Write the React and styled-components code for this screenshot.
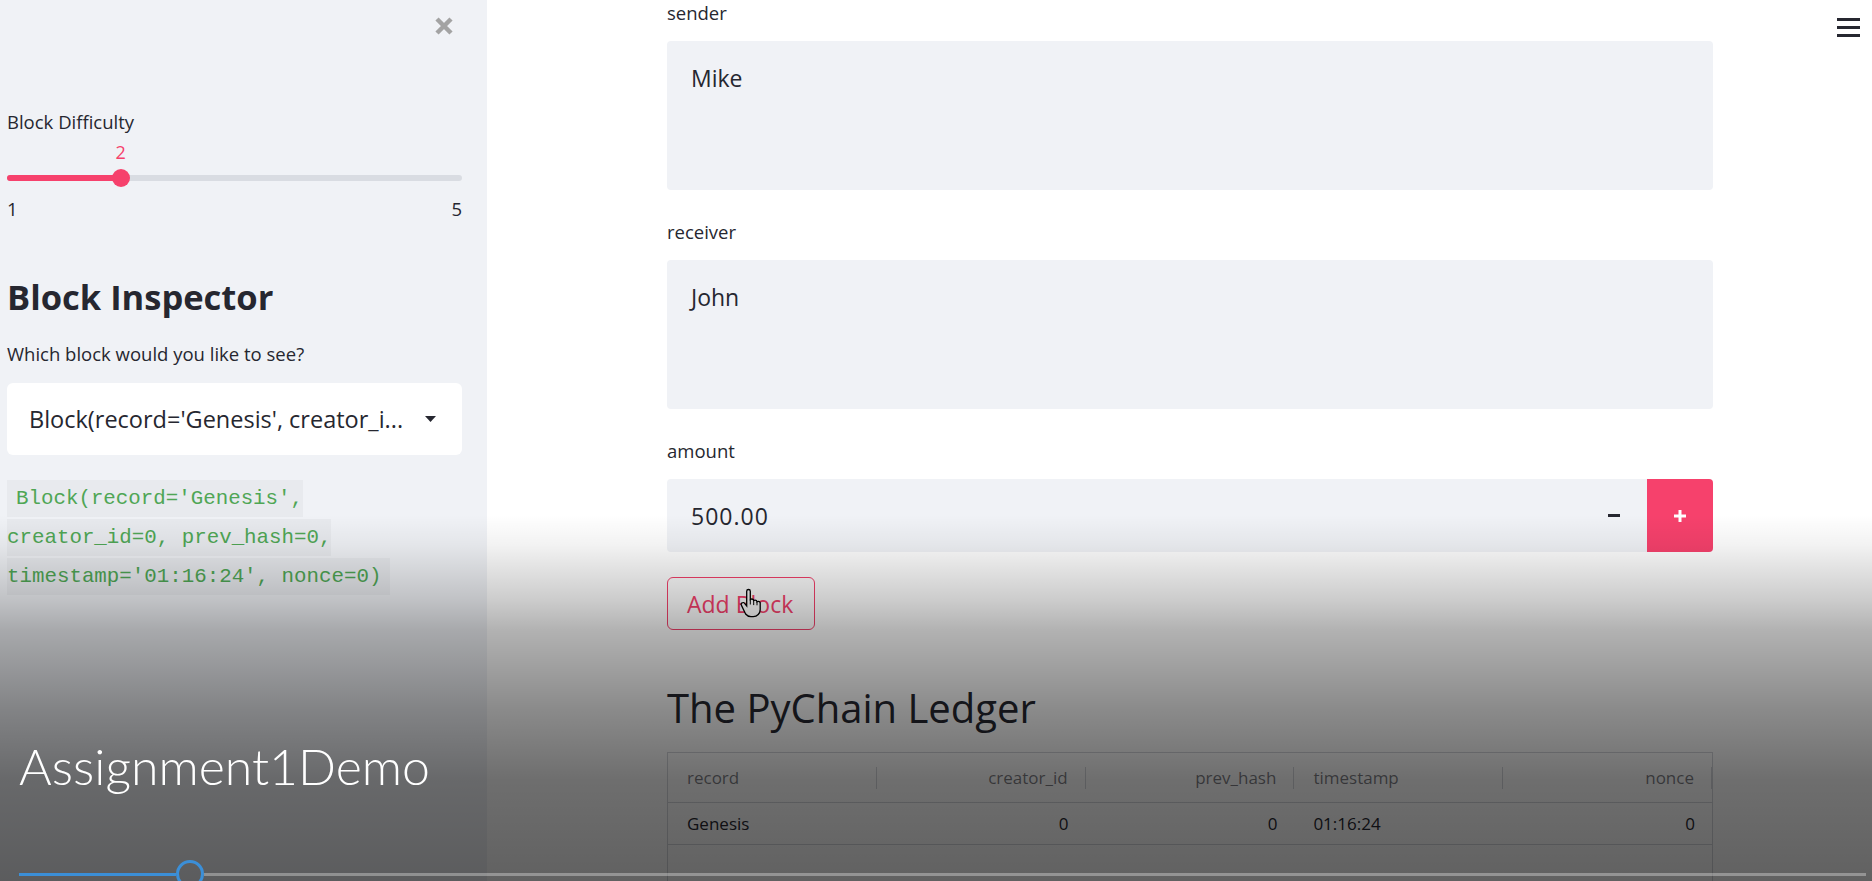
import React from "react";
import styled, { createGlobalStyle } from "styled-components";

const RED = "#f6416c";
const INK = "#262730";
const LINE = "#d5d7dc";

const GlobalStyle = createGlobalStyle`
  html, body {
    margin: 0;
    padding: 0;
    height: 100%;
    overflow: hidden;
    background: #fff;
  }
  body {
    font-family: "Open Sans", "Noto Sans", sans-serif;
    color: ${INK};
  }
  * {
    box-sizing: border-box;
  }
`;

const Page = styled.div`
  position: relative;
  display: flex;
  width: 100vw;
  height: 100vh;
  overflow: hidden;
`;

/* ---------- sidebar ---------- */

const Sidebar = styled.aside`
  flex: 0 0 487px;
  background: #f0f2f6;
  padding: 16px 25px 0 7px;
  display: flex;
  flex-direction: column;
`;

const CloseRow = styled.div`
  display: flex;
  justify-content: flex-end;
  padding-right: 7px;
  height: 20px;
`;

const SmallLabel = styled.div`
  font-size: 18.5px;
  line-height: 26px;
  margin-top: ${(p) => p.$top || 0}px;
`;

const SliderBox = styled.div`
  margin-top: 5px;
`;

const ValueRow = styled.div`
  position: relative;
  height: 24px;
`;

const SliderValue = styled.span`
  position: absolute;
  top: 0;
  transform: translateX(-50%);
  color: ${RED};
  font-size: 18px;
  line-height: 24px;
`;

const Track = styled.div`
  position: relative;
  margin-top: 11px;
  height: 6px;
  border-radius: 3px;
  background: #d9dce2;
`;

const Fill = styled.div`
  position: absolute;
  left: 0;
  top: 0;
  bottom: 0;
  border-radius: 3px;
  background: ${RED};
`;

const Thumb = styled.div`
  position: absolute;
  top: 50%;
  width: 18px;
  height: 18px;
  border-radius: 50%;
  background: ${RED};
  transform: translate(-50%, -50%);
`;

const Ticks = styled.div`
  display: flex;
  justify-content: space-between;
  margin-top: 16px;
  font-size: 18.5px;
  line-height: 24px;
`;

const SideHeading = styled.h2`
  margin: 55px 0 0;
  font-size: 34.5px;
  font-weight: 700;
  line-height: 41px;
`;

const SelectBox = styled.div`
  margin-top: 16px;
  height: 72px;
  background: #fff;
  border-radius: 6px;
  display: flex;
  align-items: center;
  justify-content: space-between;
  padding: 0 26px 0 22px;
  font-size: 23.5px;
  white-space: nowrap;
`;

const CodeText = styled.p`
  margin: 24px 0 0;
  font-family: "Liberation Mono", monospace;
  font-size: 20.8px;
  line-height: 39px;

  code {
    font-family: inherit;
    color: #4fa655;
    background: #e8eaee;
    padding: 7px 9px;
  }
`;

/* ---------- main ---------- */

const Main = styled.main`
  flex: 1;
  display: flex;
  align-items: flex-start;
  background: #fff;
  padding-left: 180px;
`;

const Column = styled.div`
  flex: none;
  width: 1046px;
`;

const MenuButton = styled.div`
  margin: 18px 12px 0 auto;
  width: 23px;
  display: flex;
  flex-direction: column;
  gap: 5px;

  span {
    height: 3px;
    background: ${INK};
  }
`;

const Field = styled.div`
  & + & {
    margin-top: 29px;
  }
`;

const FieldLabel = styled.div`
  font-size: 18.5px;
  line-height: 26px;
  margin-bottom: 15px;
`;

const TextBox = styled.div`
  height: 149px;
  background: #f0f2f6;
  border-radius: 4px;
  padding: 20px 24px;
  font-size: 23px;
  line-height: 34px;
`;

const NumberBox = styled.div`
  display: flex;
  height: 73px;
  background: #f0f2f6;
  border-radius: 4px;
  overflow: hidden;
`;

const NumberValue = styled.div`
  flex: 1;
  display: flex;
  align-items: center;
  padding-left: 24px;
  font-size: 23px;
  letter-spacing: 1px;
`;

const StepButton = styled.div`
  width: ${(p) => (p.$primary ? 66 : 67)}px;
  display: flex;
  align-items: center;
  justify-content: center;
  background: ${(p) => (p.$primary ? RED : "transparent")};
`;

const AddButton = styled.div`
  position: relative;
  margin-top: 25px;
  width: 148px;
  height: 53px;
  border: 1px solid ${RED};
  border-radius: 6px;
  background: #fff;
  color: ${RED};
  font-size: 23px;
  display: flex;
  align-items: center;
  padding-left: 19px;
  white-space: nowrap;
`;

const Pointer = styled.svg`
  position: absolute;
  left: 72px;
  top: 9px;
`;

const Heading = styled.h2`
  margin: 54px 0 0;
  font-size: 40px;
  font-weight: 400;
  line-height: 48px;
`;

const Table = styled.div`
  margin-top: 20px;
  height: 240px;
  border: 1px solid ${LINE};
  background: #fff;
`;

const Row = styled.div`
  display: grid;
  grid-template-columns: repeat(5, 1fr);
  align-items: center;
  height: ${(p) => (p.$head ? 50 : 42)}px;
  border-bottom: 1px solid ${LINE};
  font-size: 17px;
`;

const HeadCell = styled.div`
  height: 22px;
  line-height: 22px;
  border-right: 1px solid ${LINE};
  color: rgba(38, 39, 48, 0.6);
  text-align: ${(p) => (p.$num ? "right" : "left")};
  padding: ${(p) => (p.$num ? "0 17px 0 0" : "0 0 0 19px")};
`;

const Cell = styled.div`
  text-align: ${(p) => (p.$num ? "right" : "left")};
  padding: ${(p) => (p.$num ? "0 17px 0 0" : "0 0 0 19px")};
`;

/* ---------- video chrome on top ---------- */

const VideoChrome = styled.div`
  position: absolute;
  inset: 0;
  pointer-events: none;
  display: flex;
  flex-direction: column;
  justify-content: flex-end;
  background: linear-gradient(
    to bottom,
    rgba(0, 0, 0, 0) 0px,
    rgba(0, 0, 0, 0) 515px,
    rgba(0, 0, 0, 0.05) 545px,
    rgba(0, 0, 0, 0.2) 600px,
    rgba(0, 0, 0, 0.3) 630px,
    rgba(0, 0, 0, 0.46) 710px,
    rgba(0, 0, 0, 0.57) 780px,
    rgba(0, 0, 0, 0.62) 881px
  );
`;

const VideoTitle = styled.div`
  margin-left: 19px;
  font-family: Lato, "Open Sans", sans-serif;
  font-weight: 300;
  font-size: 50px;
  line-height: 60px;
  color: #fff;
`;

const Progress = styled.div`
  display: flex;
  align-items: center;
  height: 28px;
  margin: 64px 6px -7px 19px;
`;

const Played = styled.div`
  width: 157px;
  height: 3px;
  background: #3b8fd8;
`;

const Knob = styled.div`
  flex: none;
  width: 28px;
  height: 28px;
  border: 3px solid #3b8fd8;
  border-radius: 50%;
`;

const Rest = styled.div`
  flex: 1;
  height: 3px;
  background: rgba(255, 255, 255, 0.32);
`;

const columns = [
  { key: "record", num: false },
  { key: "creator_id", num: true },
  { key: "prev_hash", num: true },
  { key: "timestamp", num: false },
  { key: "nonce", num: true },
];

const ledger = [
  { record: "Genesis", creator_id: 0, prev_hash: 0, timestamp: "01:16:24", nonce: 0 },
];

export default function App() {
  const min = 1;
  const max = 5;
  const difficulty = 2;
  const pct = ((difficulty - min) / (max - min)) * 100;

  return (
    <Page>
      <GlobalStyle />
      <Sidebar>
        <CloseRow>
          <svg width="22" height="20" viewBox="0 0 22 20">
            <path d="M4 3 L18 17 M18 3 L4 17" stroke="#a3a3a3" strokeWidth="4.5" />
          </svg>
        </CloseRow>

        <SmallLabel $top={73}>Block Difficulty</SmallLabel>
        <SliderBox>
          <ValueRow>
            <SliderValue style={{ left: `${pct}%` }}>{difficulty}</SliderValue>
          </ValueRow>
          <Track>
            <Fill style={{ width: `${pct}%` }} />
            <Thumb style={{ left: `${pct}%` }} />
          </Track>
          <Ticks>
            <span>{min}</span>
            <span>{max}</span>
          </Ticks>
        </SliderBox>

        <SideHeading>Block Inspector</SideHeading>
        <SmallLabel $top={24}>Which block would you like to see?</SmallLabel>
        <SelectBox>
          <span>Block(record='Genesis', creator_i...</span>
          <svg width="11" height="6" viewBox="0 0 11 6">
            <path d="M0 0 H11 L5.5 6 Z" fill={INK} />
          </svg>
        </SelectBox>
        <CodeText>
          <code>
            Block(record='Genesis', creator_id=0, prev_hash=0, timestamp='01:16:24', nonce=0)
          </code>
        </CodeText>
      </Sidebar>

      <Main>
        <Column>
          <Field>
            <FieldLabel>sender</FieldLabel>
            <TextBox>Mike</TextBox>
          </Field>
          <Field>
            <FieldLabel>receiver</FieldLabel>
            <TextBox>John</TextBox>
          </Field>
          <Field>
            <FieldLabel>amount</FieldLabel>
            <NumberBox>
              <NumberValue>500.00</NumberValue>
              <StepButton>
                <svg width="12" height="3" viewBox="0 0 12 3">
                  <rect width="12" height="3" fill={INK} />
                </svg>
              </StepButton>
              <StepButton $primary>
                <svg width="12" height="12" viewBox="0 0 12 12">
                  <path d="M6 0 V12 M0 6 H12" stroke="#fff" strokeWidth="3" />
                </svg>
              </StepButton>
            </NumberBox>
          </Field>

          <AddButton>
            Add Block
            <Pointer width="24" height="32" viewBox="0 0 24 32">
              <path
                d="M8.5 2.5c1 0 1.8.8 1.8 1.8v8.2c.4-.3.9-.5 1.5-.5 1 0 1.8.7 1.9 1.6.4-.3.9-.5 1.4-.5 1 0 1.8.7 1.9 1.7.4-.3.8-.4 1.3-.4 1.1 0 1.9.9 1.9 1.9v6.2c0 4-3 7.1-6.9 7.1h-2.4c-2.1 0-4-1-5.3-2.6L1.6 18.6c-.7-.9-.5-2.1.4-2.7.8-.6 2-.4 2.6.4l2.1 2.6V4.3c0-1 .8-1.8 1.8-1.8z"
                fill="#fff"
                stroke="#000"
                strokeWidth="1.3"
              />
              <path d="M10.3 12.5v5M13.7 13.6v4.5M17 14.8v3.5" stroke="#000" strokeWidth="1" />
            </Pointer>
          </AddButton>

          <Heading>The PyChain Ledger</Heading>
          <Table>
            <Row $head>
              {columns.map((c) => (
                <HeadCell key={c.key} $num={c.num}>
                  {c.key}
                </HeadCell>
              ))}
            </Row>
            {ledger.map((r) => (
              <Row key={r.record}>
                {columns.map((c) => (
                  <Cell key={c.key} $num={c.num}>
                    {r[c.key]}
                  </Cell>
                ))}
              </Row>
            ))}
          </Table>
        </Column>
        <MenuButton>
          <span />
          <span />
          <span />
        </MenuButton>
      </Main>

      <VideoChrome>
        <VideoTitle>Assignment1Demo</VideoTitle>
        <Progress>
          <Played />
          <Knob />
          <Rest />
        </Progress>
      </VideoChrome>
    </Page>
  );
}
